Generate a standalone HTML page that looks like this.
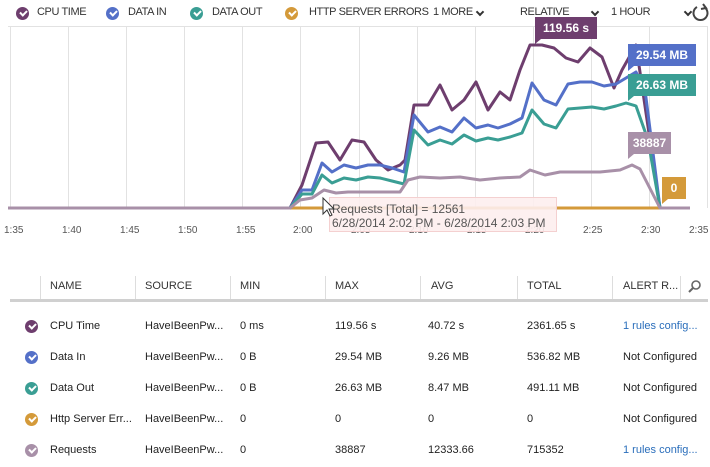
<!DOCTYPE html>
<html><head><meta charset="utf-8"><style>
body{margin:0;width:710px;height:467px;background:#fff;font-family:"Segoe UI","Liberation Sans",sans-serif;font-size:11px;color:#222;position:relative;overflow:hidden}
.a{position:absolute;white-space:nowrap}
.chk{position:absolute;width:13px;height:13px;border-radius:50%}
.chk:after{content:"";position:absolute;left:3.5px;top:2.5px;width:5px;height:3px;border-left:2px solid #fff;border-bottom:2px solid #fff;transform:rotate(-45deg)}
.lg{font-size:11px;color:#333;letter-spacing:-0.4px}
.hd{font-size:11px;color:#333}
.cv{position:absolute;width:4px;height:4px;border-right:2px solid #333;border-bottom:2px solid #333;transform:rotate(45deg)}
.sep{position:absolute;top:276px;width:1px;height:24px;background:#ddd}
.lbl{position:absolute;color:#fff;font-size:12px;height:22px;line-height:22px;text-align:center;font-weight:bold}
.lbl:after{content:"";position:absolute;left:0;bottom:-5px;border-left:0 solid transparent;border-right:6px solid transparent;border-top:5px solid;border-top-color:inherit}
</style></head><body>
<div class="chk" style="left:16px;top:7px;background:#6e3e6e"></div><div class="a lg" style="left:37px;top:6px">CPU TIME</div>
<div class="chk" style="left:106px;top:7px;background:#5470c8"></div><div class="a lg" style="left:128px;top:6px">DATA IN</div>
<div class="chk" style="left:190px;top:7px;background:#3a9e94"></div><div class="a lg" style="left:212px;top:6px">DATA OUT</div>
<div class="chk" style="left:285px;top:7px;background:#d49a3a"></div><div class="a lg" style="left:309px;top:6px">HTTP SERVER ERRORS</div>
<div class="a lg" style="left:433px;top:6px">1 MORE</div><div class="cv" style="left:477px;top:9px"></div>
<div class="a lg" style="left:520px;top:6px">RELATIVE</div><div class="cv" style="left:592px;top:9px"></div>
<div class="a lg" style="left:611px;top:6px">1 HOUR</div><div class="cv" style="left:685px;top:9px"></div>
<svg class="a" style="left:691px;top:3px" width="20" height="20" viewBox="0 0 20 20"><path d="M13 4 A7 7 0 1 1 6 4" fill="none" stroke="#444" stroke-width="2"/><path d="M12 1 L15 5 L10 6" fill="none" stroke="#444" stroke-width="2"/></svg>
<svg class="a" style="left:0;top:0" width="710" height="240">
<g stroke="#e2e2e2" stroke-width="1">
<line x1="10.5" y1="26" x2="10.5" y2="208"/><line x1="68.5" y1="26" x2="68.5" y2="208"/><line x1="126.5" y1="26" x2="126.5" y2="208"/><line x1="184.5" y1="26" x2="184.5" y2="208"/><line x1="242.5" y1="26" x2="242.5" y2="208"/><line x1="300.5" y1="26" x2="300.5" y2="208"/><line x1="359.5" y1="26" x2="359.5" y2="208"/><line x1="417.5" y1="26" x2="417.5" y2="208"/><line x1="475.5" y1="26" x2="475.5" y2="208"/><line x1="533.5" y1="26" x2="533.5" y2="208"/><line x1="591.5" y1="26" x2="591.5" y2="208"/><line x1="649.5" y1="26" x2="649.5" y2="208"/><line x1="707.5" y1="26" x2="707.5" y2="208"/>
<line x1="8" y1="26.5" x2="708" y2="26.5"/>
</g>
<g fill="none" stroke-width="3" stroke-linejoin="round">
<polyline stroke="#d49a3a" points="8,208 690,208"/>
<polyline stroke="#6e3e6e" points="8,208 290,208 302,185 316,143 328,142 340,160 352,140 364,142 376,160 388,170 400,165 405,160 414,105 428,105 440,85 452,110 464,100 476,82 488,110 500,92 510,100 520,70 530,45 542,45 554,48 566,58 578,62 590,48 602,57 614,88 622,70 636,45 660,208"/>
<polyline stroke="#5470c8" points="290,208 302,190 312,190 322,163 332,172 344,165 356,168 368,165 380,165 392,168 404,172 414,115 428,132 440,127 452,132 464,118 476,128 488,125 498,128 510,124 522,118 532,83 544,100 556,105 568,84 580,82 592,82 604,86 616,84 626,78 636,72 645,90 660,208"/>
<polyline stroke="#3a9e94" points="290,208 302,194 312,194 322,175 332,183 344,178 356,180 368,177 380,178 392,181 404,184 414,130 428,145 440,140 452,144 464,135 476,141 488,138 498,140 510,137 522,133 532,110 544,124 556,128 568,109 580,108 592,107 604,109 616,106 626,103 636,106 648,140 660,208"/>
<polyline stroke="#a890a8" points="8,208 290,208 300,200 312,198 324,190 336,193 348,192 360,192 372,192 384,192 400,192 408,180 420,177 440,178 460,177 480,180 500,178 520,177 530,170 545,175 560,172 580,172 600,172 620,170 632,165 640,169 660,208 690,208"/>
</g>
<g fill="#555" font-size="10" font-family="Segoe UI,Liberation Sans,sans-serif">
<text x="4" y="233">1:35</text><text x="62" y="233">1:40</text><text x="120" y="233">1:45</text><text x="178" y="233">1:50</text><text x="236" y="233">1:55</text><text x="293" y="233">2:00</text><text x="351" y="233">2:05</text><text x="409" y="233">2:10</text><text x="467" y="233">2:15</text><text x="525" y="233">2:20</text><text x="583" y="233">2:25</text><text x="641" y="233">2:30</text><text x="689" y="233">2:35</text>
</g>
<rect x="329.5" y="197.5" width="227" height="34" fill="#fdeeee" fill-opacity="0.9" stroke="#f4d0d0"/>
<text x="332" y="213" font-size="12" fill="#555" font-family="Segoe UI,Liberation Sans,sans-serif">Requests [Total] = 12561</text>
<text x="332" y="227" font-size="12" fill="#555" font-family="Segoe UI,Liberation Sans,sans-serif">6/28/2014 2:02 PM - 6/28/2014 2:03 PM</text>
<path d="M323 198 L323 214 L327 210 L330 216 L332 215 L329 209 L334 209 Z" fill="#fff" stroke="#333"/>
</svg>
<div class="lbl" style="left:535px;top:17px;width:62px;background:#6e3e6e;border-color:#6e3e6e">119.56 s</div>
<div class="lbl" style="left:628px;top:44px;width:68px;background:#5470c8;border-color:#5470c8">29.54 MB</div>
<div class="lbl" style="left:628px;top:74px;width:68px;background:#3a9e94;border-color:#3a9e94">26.63 MB</div>
<div class="lbl" style="left:628px;top:132px;width:43px;background:#a890a8;border-color:#a890a8">38887</div>
<div class="lbl" style="left:662px;top:177px;width:24px;background:#d49a3a;border-color:#d49a3a">0</div>

<div class="sep" style="left:40px"></div><div class="sep" style="left:135px"></div><div class="sep" style="left:230px"></div><div class="sep" style="left:325px"></div><div class="sep" style="left:420px"></div><div class="sep" style="left:517px"></div><div class="sep" style="left:612px"></div><div class="sep" style="left:680px"></div>
<div class="a hd" style="left:50px;top:280px">NAME</div><div class="a hd" style="left:145px;top:280px">SOURCE</div><div class="a hd" style="left:240px;top:280px">MIN</div><div class="a hd" style="left:335px;top:280px">MAX</div><div class="a hd" style="left:431px;top:280px">AVG</div><div class="a hd" style="left:527px;top:280px">TOTAL</div><div class="a hd" style="left:623px;top:280px">ALERT R...</div>
<svg class="a" style="left:688px;top:280px" width="14" height="14"><circle cx="8" cy="5" r="4" fill="none" stroke="#666" stroke-width="1.6"/><line x1="5" y1="8" x2="1" y2="12" stroke="#666" stroke-width="2"/></svg>
<div class="a" style="left:10px;top:299px;width:698px;height:3px;background:#d0d0d0"></div>

<div class="chk" style="left:25px;top:320px;background:#6e3e6e"></div>
<div class="a" style="left:50px;top:320px">CPU Time</div><div class="a" style="left:145px;top:320px">HaveIBeenPw...</div><div class="a" style="left:240px;top:320px">0 ms</div><div class="a" style="left:335px;top:320px">119.56 s</div><div class="a" style="left:428px;top:320px">40.72 s</div><div class="a" style="left:527px;top:320px">2361.65 s</div><div class="a" style="left:623px;top:320px;color:#2a6ebb">1 rules config...</div>
<div class="chk" style="left:25px;top:351px;background:#5470c8"></div>
<div class="a" style="left:50px;top:351px">Data In</div><div class="a" style="left:145px;top:351px">HaveIBeenPw...</div><div class="a" style="left:240px;top:351px">0 B</div><div class="a" style="left:335px;top:351px">29.54 MB</div><div class="a" style="left:428px;top:351px">9.26 MB</div><div class="a" style="left:527px;top:351px">536.82 MB</div><div class="a" style="left:623px;top:351px">Not Configured</div>
<div class="chk" style="left:25px;top:382px;background:#3a9e94"></div>
<div class="a" style="left:50px;top:382px">Data Out</div><div class="a" style="left:145px;top:382px">HaveIBeenPw...</div><div class="a" style="left:240px;top:382px">0 B</div><div class="a" style="left:335px;top:382px">26.63 MB</div><div class="a" style="left:428px;top:382px">8.47 MB</div><div class="a" style="left:527px;top:382px">491.11 MB</div><div class="a" style="left:623px;top:382px">Not Configured</div>
<div class="chk" style="left:25px;top:413px;background:#d49a3a"></div>
<div class="a" style="left:50px;top:413px">Http Server Err...</div><div class="a" style="left:145px;top:413px">HaveIBeenPw...</div><div class="a" style="left:240px;top:413px">0</div><div class="a" style="left:335px;top:413px">0</div><div class="a" style="left:428px;top:413px">0</div><div class="a" style="left:527px;top:413px">0</div><div class="a" style="left:623px;top:413px">Not Configured</div>
<div class="chk" style="left:25px;top:444px;background:#a890a8"></div>
<div class="a" style="left:50px;top:444px">Requests</div><div class="a" style="left:145px;top:444px">HaveIBeenPw...</div><div class="a" style="left:240px;top:444px">0</div><div class="a" style="left:335px;top:444px">38887</div><div class="a" style="left:428px;top:444px">12333.66</div><div class="a" style="left:527px;top:444px">715352</div><div class="a" style="left:623px;top:444px;color:#2a6ebb">1 rules config...</div>
</body></html>
